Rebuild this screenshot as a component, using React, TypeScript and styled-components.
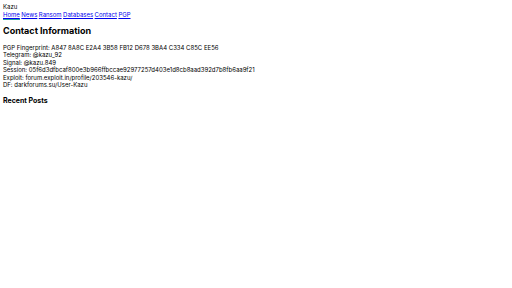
import React from "react";
import styled, { createGlobalStyle } from "styled-components";

const Global = createGlobalStyle`
  html, body { margin: 0; padding: 0; background: #fff; }
  body { padding: 3px; font-family: Inter, "Noto Sans", sans-serif; font-size: 6px; line-height: 7.5px; color: #000; }
`;

const Header = styled.header`
  display: flex;
  flex-direction: column;
`;

const Brand = styled.div``;

const Nav = styled.nav`
  display: flex;
  gap: 1.5px;
`;

const NavLink = styled.a<{ $active?: boolean }>`
  color: #0000ee;
  text-decoration: underline;
  border-bottom: ${(p) => (p.$active ? "1px solid #2aa7a0" : "none")};
  padding-bottom: ${(p) => (p.$active ? "0.5px" : "0")};
`;

const Title = styled.h1`
  font-size: 9px;
  font-weight: 700;
  margin: 5px 0 8px;
  line-height: 11px;
`;

const Info = styled.div`
  display: flex;
  flex-direction: column;
`;

const SubTitle = styled.h2`
  font-size: 7px;
  font-weight: 700;
  margin: 7px 0;
  line-height: 9px;
`;

export default function App() {
  return (
    <>
      <Global />
      <Header>
        <Brand>Kazu</Brand>
        <Nav>
          <NavLink $active href="#">Home</NavLink>
          <NavLink href="#">News</NavLink>
          <NavLink href="#">Ransom</NavLink>
          <NavLink href="#">Databases</NavLink>
          <NavLink href="#">Contact</NavLink>
          <NavLink href="#">PGP</NavLink>
        </Nav>
      </Header>
      <Title>Contact Information</Title>
      <Info>
        <div>PGP Fingerprint: A847 8A8C E2A4 3B58 FB12 D678 3BA4 C334 C85C EE56</div>
        <div>Telegram: @kazu_92</div>
        <div>Signal: @kazu.849</div>
        <div>Session: 05f6d3dfbcaf800e3b966ffbccae92977257d403e1d8cb8aad392d7b8fb6aa9f21</div>
        <div>Exploit: forum.exploit.in/profile/203546-kazu/</div>
        <div>DF: darkforums.su/User-Kazu</div>
      </Info>
      <SubTitle>Recent Posts</SubTitle>
    </>
  );
}
